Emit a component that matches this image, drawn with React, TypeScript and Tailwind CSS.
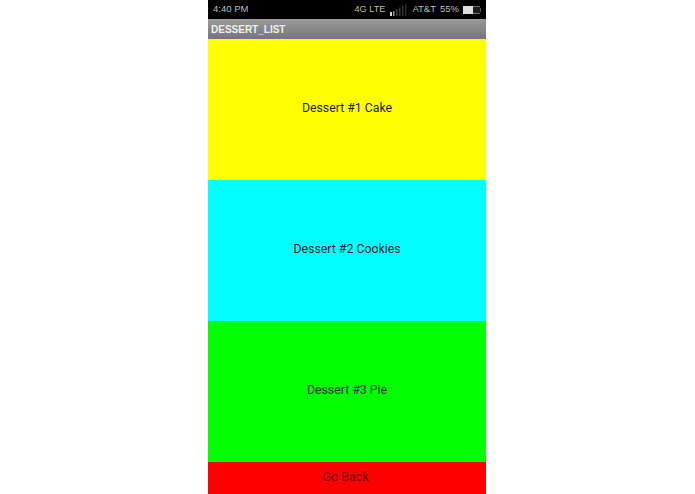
const desserts = [
  { label: "Dessert #1 Cake", color: "bg-[#ffff00]" },
  { label: "Dessert #2 Cookies", color: "bg-[#00ffff]" },
  { label: "Dessert #3 Pie", color: "bg-[#00ff00]" },
];

function SignalIcon() {
  return (
    <svg width="17" height="12" viewBox="0 0 17 12" className="ml-[5px]">
      <rect x="0" y="8" width="2" height="4" fill="#d8d8d8" />
      <rect x="3" y="7" width="1.5" height="5" fill="#999" />
      <rect x="6" y="5" width="1.5" height="7" fill="#444" />
      <rect x="9" y="3.5" width="1.5" height="8.5" fill="#3a3a3a" />
      <rect x="12" y="2" width="1.5" height="10" fill="#333" />
      <rect x="15" y="0.5" width="1.5" height="11.5" fill="#2c2c2c" />
    </svg>
  );
}

function BatteryIcon() {
  return (
    <svg width="18" height="8" viewBox="0 0 18 8" className="ml-[4px]">
      <rect x="0" y="0" width="10" height="8" fill="#e0e0e0" />
      <rect x="10" y="0" width="7" height="1.5" fill="#666" />
      <rect x="10" y="6.5" width="7" height="1.5" fill="#666" />
      <rect x="10" y="1.5" width="7" height="5" fill="#1c1c1c" />
      <rect x="17" y="2" width="1" height="4" fill="#555" />
    </svg>
  );
}

export default function App() {
  return (
    <div className="flex h-[494px] w-[695px] justify-center overflow-hidden bg-white font-['Roboto',sans-serif]">
      <div className="mr-[1px] flex w-[278px] flex-col">
        <div className="flex h-[19px] items-center justify-between bg-black pl-[5px] pr-[5px] font-['Liberation_Sans',sans-serif] text-[9.5px] text-[#bcbcbc]">
          <span>4:40 PM</span>
          <div className="flex items-center">
            <span className="text-[9.2px]">4G LTE</span>
            <SignalIcon />
            <span className="ml-[5px]">AT&amp;T</span>
            <span className="ml-[4px]">55%</span>
            <BatteryIcon />
          </div>
        </div>
        <div className="flex h-[20px] items-center bg-gradient-to-b from-[#9a9a9a] to-[#767676] pl-[3px] font-['Liberation_Sans',sans-serif] text-[10px] font-bold text-[#f0f0f0]">
          DESSERT_LIST
        </div>
        {desserts.map((d) => (
          <div
            key={d.label}
            className={`flex h-[141px] items-center justify-center pb-[3px] text-[12.3px] text-[#1c1c1c] ${d.color}`}
          >
            {d.label}
          </div>
        ))}
        <div className="flex h-[32px] items-center justify-center bg-[#ff0000] pb-[2px] pr-[3px] text-[12.5px] text-[#6e0000]">
          Go Back
        </div>
      </div>
    </div>
  );
}
